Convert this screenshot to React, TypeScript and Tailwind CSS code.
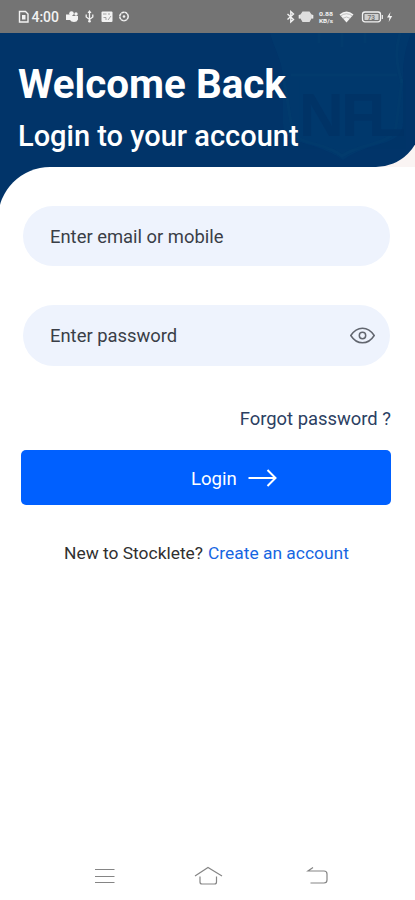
import React from 'react';

function StatusBar() {
  return (
    <div className="flex h-[33px] w-full shrink-0 items-center bg-[#747474] text-[#f2f2f2]">
      <svg width="415" height="33" viewBox="0 0 415 33" fill="none" stroke="currentColor">
        <path d="M19.500 11.500h6l2.500 2.500v8h-8.500z" strokeWidth="1.400" />
        <rect x="22" y="15" width="3.500" height="4.500" fill="currentColor" stroke="none" />
        <text x="31.500" y="22" fontSize="14" fontWeight="500" fontFamily="Roboto, sans-serif" fill="currentColor" stroke="none" textLength="27.500">4:00</text>
        <g fill="currentColor" stroke="none">
          <circle cx="71.500" cy="13.500" r="2.300" />
          <circle cx="76" cy="14" r="1.700" />
          <path d="M66 14.500h6v1.500h6v3.500q-1 2.500-4 2.500-3 0-4-2h-4z" />
        </g>
        <path d="M89.500 11v11M86.200 14.500v2.500l3.300 2.500 3.300-2.500v-2.500" strokeWidth="1.300" />
        <path d="M87.500 13l2-3 2 3z" fill="currentColor" stroke="none" />
        <circle cx="89.500" cy="21.300" r="1.300" fill="currentColor" stroke="none" />
        <rect x="101.500" y="11.500" width="11" height="10.500" rx="1" fill="currentColor" stroke="none" />
        <path d="M103 14h3.500M108 20l3-4M103.500 17.500h2.500v2.500M109 13v2" stroke="#999" strokeWidth=".9" />
        <circle cx="124" cy="16.500" r="4.200" strokeWidth="1.500" strokeDasharray="3 .3" />
        <circle cx="124" cy="16.500" r="1.300" fill="currentColor" stroke="none" />
        <path d="M287.500 14l6 5.500-2.700 2.500V11.500l2.700 2.500-6 5.500" strokeWidth="1.400" />
        <path d="M302.500 11.500h7l2 3h1v4h-1l-2 3.500h-7l-2-3.500h-1v-4h1z" fill="#dedede" stroke="none" />
        <path d="M299.300 15v3.500M312.700 15v3.500" strokeWidth="1.200" />
        <g fill="currentColor" stroke="none" fontFamily="Roboto, sans-serif" fontWeight="700">
          <text x="319" y="16" fontSize="6" textLength="14" lengthAdjust="spacingAndGlyphs">0.88</text>
          <text x="319" y="22.500" fontSize="5.500" textLength="14" lengthAdjust="spacingAndGlyphs">KB/s</text>
        </g>
        <path d="M339.500 14.500q7-6 14 0l-7 8z" fill="currentColor" stroke="none" />
        <path d="M340.500 16q6-4.500 12 0M342.500 18.500q4-3 8 0" stroke="#999" strokeWidth=".6" />
        <rect x="362.500" y="12" width="18" height="9.800" rx="2.500" strokeWidth="1.300" />
        <rect x="364.500" y="14" width="14" height="6" rx=".5" fill="#cfcfcf" stroke="none" />
        <text x="367.500" y="19.500" fontSize="6.500" fontWeight="700" fontFamily="Roboto, sans-serif" fill="#777" stroke="none">73</text>
        <path d="M382.300 15v4" strokeWidth="1.200" />
        <path d="M390.500 12l-3.500 5.500h2.500l-.8 4.500 3.500-6h-2.500z" fill="currentColor" stroke="none" />
      </svg>
    </div>
  );
}

function Shield() {
  return (
    <svg className="absolute left-[267px] top-0" width="148" height="134" viewBox="0 0 148 134" fill="none">
      <path d="M3 0c4 16 12 26 13 45v46c0 22 32 16 60 36 26-19 60-13 60-37V42c0-16 3-28 8-42z" fill="#023a6e" opacity=".75" />
      <path d="M24 42h106M17 48c5 25 5 35 9 50 6 15 31 10 49 25 20-14 49-10 54-29l6-48" stroke="#05426f" strokeWidth="3" opacity=".35" />
      <path d="M52 0v10M75 0v14M98 0v10M133 0c-5 17-4 30 2 50" stroke="#05426f" strokeWidth="3" opacity=".3" />
      <text x="32 74 101" y="103" fontSize="62" fontWeight="700" fontFamily="Liberation Sans Narrow, Liberation Sans, sans-serif" fill="#013265" opacity=".75">NFL</text>
    </svg>
  );
}

function Header() {
  return (
    <header className="h-[134px] shrink-0 bg-[#faf4f3]">
      <div className="-mr-[6px] h-full overflow-hidden rounded-br-[45px] bg-[#013469]">
        <div className="relative h-full pl-[18px] pt-[28px] text-white">
          <Shield />
          <h1 className="relative w-max whitespace-nowrap text-[40.400px] font-bold leading-[48px]">Welcome Back</h1>
          <p className="relative mt-[9px] w-max whitespace-nowrap text-[29px] font-medium leading-[36px]">Login to your account</p>
        </div>
      </div>
    </header>
  );
}

export default function App() {
  return (
    <div className="flex h-[900px] w-[415px] flex-col overflow-hidden bg-white font-['Roboto',sans-serif] text-[#3a3e47]">
      <StatusBar />
      <Header />
      <div className="h-[39px] shrink-0 overflow-hidden bg-[#013469]">
        <div className="-ml-[2px] h-[80px] rounded-tl-[52px] bg-white" />
      </div>
      <main className="flex flex-col">
        <div className="ml-[23px] flex h-[60px] w-[367px] items-center rounded-full bg-[#eef3fd] pl-[27px] pt-[1px] text-[18.400px]">
          <span>Enter email or mobile</span>
        </div>
        <div className="ml-[23px] mt-[39px] flex h-[61px] w-[367px] items-center justify-between rounded-full bg-[#eef3fd] pl-[27px] pr-[15px] text-[18.400px]">
          <span className="pt-[1px]">Enter password</span>
          <svg width="25" height="17" viewBox="0 0 25 17" fill="none" stroke="#62666f" strokeWidth="1.500">
            <path d="M.8 8.500C7-1.300 18-1.300 24.200 8.500 18 18.300 7 18.300.8 8.500z" />
            <circle cx="12.500" cy="8.500" r="3.200" />
          </svg>
        </div>
        <a className="mr-[24px] mt-[41px] self-end text-[18.400px] leading-6 text-[#2b4062]">Forgot password ?</a>
        <button className="ml-[21px] mt-[19px] flex h-[55px] w-[370px] items-center rounded-[5px] bg-[#0060ff] pl-[170px] text-[18.600px] text-white">
          <span className="w-[57px] pt-[4px] text-left">Login</span>
          <svg width="29" height="18" viewBox="0 0 29 18" fill="none" stroke="currentColor" strokeWidth="2">
            <path d="M.5 9h27M19.500 1l8 8-8 8" />
          </svg>
        </button>
        <p className="ml-[64px] mt-[36px] flex gap-[5px] whitespace-nowrap text-[17.400px] leading-6">
          <span className="text-[#303030]">New to Stocklete?</span>
          <a className="text-[#1766e2]">Create an account</a>
        </p>
      </main>
      <nav className="mt-auto h-[48px]">
        <svg width="415" height="48" viewBox="0 852 415 48" fill="none" stroke="#858585" strokeWidth="1.200">
          <path d="M95 869.500h19.500M95 876.500h19.500M95 882.500h19.500" />
          <path d="M195 876l13-8.500 14 8.500M200 876.500v5.500q0 2 2 2h12.500q2 0 2-2v-5.500" />
          <path d="M313 867.500l-5 3.500h16q3 0 3 3v6q0 3-3 3h-13.500" />
        </svg>
      </nav>
    </div>
  );
}
